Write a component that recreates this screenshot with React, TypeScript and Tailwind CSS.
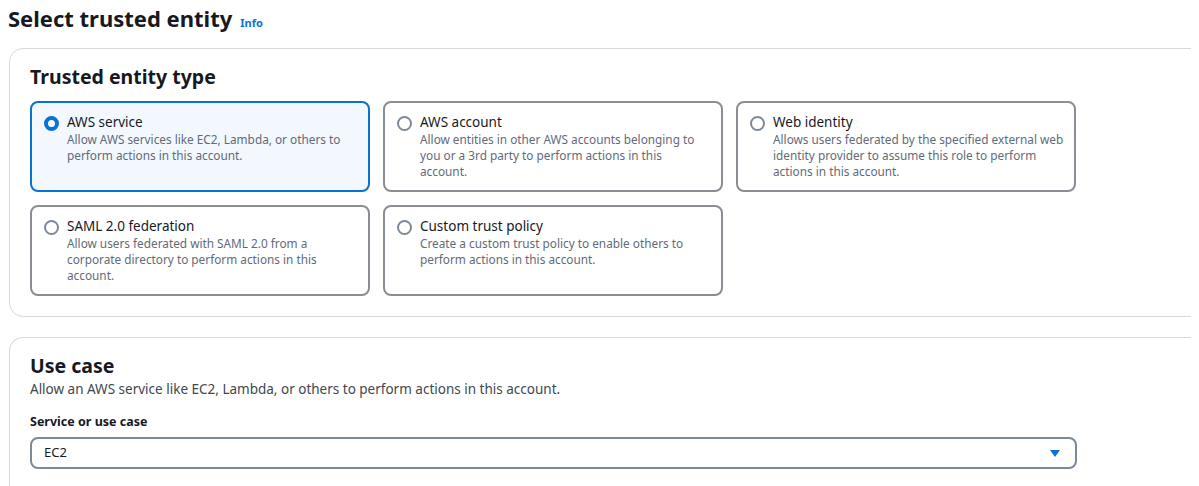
import React from 'react'

const font = { fontFamily: '"Noto Sans", "Open Sans", Arial, sans-serif' }

interface Option {
  id: string
  title: string
  lines: string[]
}

// lines split the same way the console wraps them
const options: Option[] = [
  { id: 'service', title: 'AWS service', lines: ['Allow AWS services like EC2, Lambda, or others to', 'perform actions in this account.'] },
  { id: 'account', title: 'AWS account', lines: ['Allow entities in other AWS accounts belonging to', 'you or a 3rd party to perform actions in this', 'account.'] },
  { id: 'web', title: 'Web identity', lines: ['Allows users federated by the specified external web', 'identity provider to assume this role to perform', 'actions in this account.'] },
  { id: 'saml', title: 'SAML 2.0 federation', lines: ['Allow users federated with SAML 2.0 from a', 'corporate directory to perform actions in this', 'account.'] },
  { id: 'custom', title: 'Custom trust policy', lines: ['Create a custom trust policy to enable others to', 'perform actions in this account.'] },
]

const OptionCard: React.FC<{ opt: Option; selected: boolean }> = ({ opt, selected }) => (
  <div
    className={`flex h-[91px] rounded-[8px] border-2 pl-[12px] pr-[8px] pt-[10px] gap-[8px] ${
      selected ? 'border-[#0972d3] bg-[#f2f8fd]' : 'border-[#8c8c94] bg-white'
    }`}
  >
    <div className="pt-[3px] shrink-0">
      {selected ? (
        <span className="block w-[15px] h-[15px] rounded-full border-[4px] border-[#0972d3] bg-white" />
      ) : (
        <span className="block w-[15px] h-[15px] rounded-full border-2 border-[#7d8998] bg-white" />
      )}
    </div>
    <div className="flex flex-col">
      <span className="text-[13.5px] leading-[18px] text-[#16191f]">{opt.title}</span>
      {opt.lines.map(l => (
        <span key={l} className="text-[11.8px] leading-[16px] text-[#5f6b7a] whitespace-nowrap">{l}</span>
      ))}
    </div>
  </div>
)

export default function App() {
  return (
    <div className="w-[1199px] h-[486px] overflow-hidden bg-white" style={font}>
      <div className="w-[1191px] overflow-hidden">
        <div className="pl-[8px] pt-[4px] flex items-baseline gap-[8px]">
          <h1 className="text-[22px] leading-[28px] font-bold text-[#16191f]">Select trusted entity</h1>
          <span className="text-[11px] font-bold text-[#0972d3]">Info</span>
        </div>

        <div className="ml-[9px] mr-[-20px] mt-[16px] rounded-[14px] border border-[#d5dbdb] px-[20px] pt-[15px] pb-[20px]">
          <h2 className="text-[19.5px] leading-[26px] font-bold text-[#16191f]">Trusted entity type</h2>
          <div className="mt-[11px] grid grid-cols-[340px_340px_340px] gap-x-[13px] gap-y-[13px]">
            {options.map(o => (
              <OptionCard key={o.id} opt={o} selected={o.id === 'service'} />
            ))}
          </div>
        </div>

        <div className="ml-[9px] mr-[-20px] mt-[20px] rounded-t-[14px] border border-b-0 border-[#d5dbdb] px-[20px] pt-[15px] h-[200px]">
          <h2 className="text-[19.5px] leading-[26px] font-bold text-[#16191f]">Use case</h2>
          <p className="text-[13.5px] leading-[20px] text-[#414750]">
            Allow an AWS service like EC2, Lambda, or others to perform actions in this account.
          </p>
          <div className="mt-[14px] text-[12.5px] leading-[18px] font-bold text-[#16191f]">Service or use case</div>
          <div className="mt-[6px] w-[1047px] h-[32px] rounded-[8px] border-2 border-[#7d8998] flex items-center justify-between pl-[12px] pr-[14px]">
            <span className="text-[13px] text-[#16191f]">EC2</span>
            <svg width="12" height="9" viewBox="0 0 12 9">
              <path d="M1 1h10L6 8z" fill="#0972d3" />
            </svg>
          </div>
        </div>
      </div>
    </div>
  )
}
